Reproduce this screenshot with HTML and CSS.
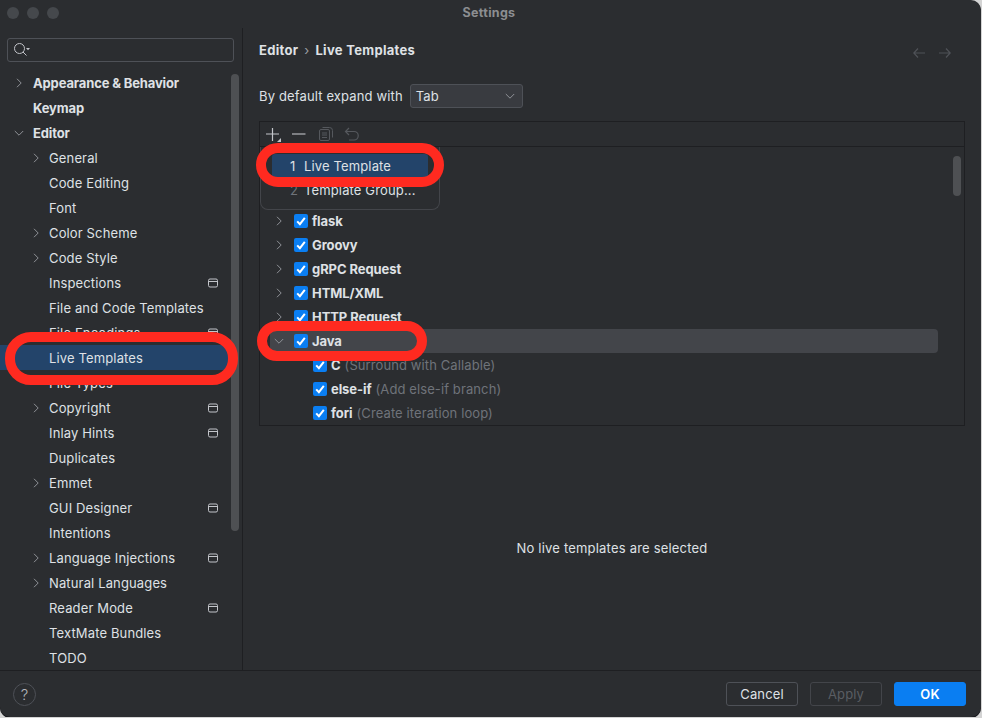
FILE: index.html
```html
<!DOCTYPE html>
<html lang="en">
<head>
  <meta charset="UTF-8" />
  <title>Settings</title>
  <link rel="stylesheet" href="styles.css">
</head>
<body>
  <svg class="defs" width="0" height="0">
    <symbol id="chev-right" viewBox="0 0 10 10"><path d="M3 .8 7.2 5 3 9.2" fill="none" stroke="#8f9297" stroke-width="1"/></symbol>
    <symbol id="chev-down" viewBox="0 0 10 10"><path d="M.8 3 5 7.2 9.2 3" fill="none" stroke="#8f9297" stroke-width="1"/></symbol>
    <symbol id="project" viewBox="0 0 10 10"><rect x=".5" y="1" width="9" height="8" rx="1.5" fill="none" stroke="#c3c5ca"/><path d="M.5 3.5h9" stroke="#c3c5ca"/></symbol>
    <symbol id="check" viewBox="0 0 14 14"><rect width="14" height="14" rx="2" fill="#0a7ef2"/><path d="M3.2 7.4 5.9 10.2 10.8 3.8" fill="none" stroke="#fff" stroke-width="2"/></symbol>
  </svg>

  <div class="window">
    <div class="titlebar">
      <div class="lights"><span></span><span></span><span></span></div>
      <span class="title">Settings</span>
    </div>

    <div class="main">
      <div class="sidebar">
        <div class="search">
          <svg width="18" height="14" viewBox="0 0 18 14"><circle cx="5.500" cy="5.500" r="5" fill="none" stroke="#c3c5ca"/><path d="M9 9l3.500 3.500" stroke="#c3c5ca"/><path d="M12 5h4l-2 2.200z" fill="#c3c5ca"/></svg>
        </div>
        <ul class="nav">
          <li class="bold"><svg class="chev"><use href="#chev-right"/></svg>Appearance &amp; Behavior</li>
          <li class="bold"><i class="chev"></i>Keymap</li>
          <li class="bold"><svg class="chev"><use href="#chev-down"/></svg>Editor</li>
          <li class="sub"><svg class="chev"><use href="#chev-right"/></svg>General</li>
          <li class="sub"><i class="chev"></i>Code Editing</li>
          <li class="sub"><i class="chev"></i>Font</li>
          <li class="sub"><svg class="chev"><use href="#chev-right"/></svg>Color Scheme</li>
          <li class="sub"><svg class="chev"><use href="#chev-right"/></svg>Code Style</li>
          <li class="sub"><i class="chev"></i>Inspections<svg class="proj"><use href="#project"/></svg></li>
          <li class="sub"><i class="chev"></i>File and Code Templates</li>
          <li class="sub"><i class="chev"></i>File Encodings<svg class="proj"><use href="#project"/></svg></li>
          <li class="sub selected"><i class="chev"></i>Live Templates</li>
          <li class="sub"><i class="chev"></i>File Types</li>
          <li class="sub"><svg class="chev"><use href="#chev-right"/></svg>Copyright<svg class="proj"><use href="#project"/></svg></li>
          <li class="sub"><i class="chev"></i>Inlay Hints<svg class="proj"><use href="#project"/></svg></li>
          <li class="sub"><i class="chev"></i>Duplicates</li>
          <li class="sub"><svg class="chev"><use href="#chev-right"/></svg>Emmet</li>
          <li class="sub"><i class="chev"></i>GUI Designer<svg class="proj"><use href="#project"/></svg></li>
          <li class="sub"><i class="chev"></i>Intentions</li>
          <li class="sub"><svg class="chev"><use href="#chev-right"/></svg>Language Injections<svg class="proj"><use href="#project"/></svg></li>
          <li class="sub"><svg class="chev"><use href="#chev-right"/></svg>Natural Languages</li>
          <li class="sub"><i class="chev"></i>Reader Mode<svg class="proj"><use href="#project"/></svg></li>
          <li class="sub"><i class="chev"></i>TextMate Bundles</li>
          <li class="sub"><i class="chev"></i>TODO</li>
        </ul>
        <div class="thumb nav-thumb"></div>
      </div>

      <div class="content">
        <div class="crumbs">
          <b>Editor</b><span class="sep">›</span><b>Live Templates</b>
          <div class="history">
            <svg width="12" height="10" viewBox="0 0 12 10"><path d="M5 .5.8 5 5 9.500M.8 5H12" fill="none" stroke="#4f5257" stroke-width="1.200"/></svg>
            <svg width="12" height="10" viewBox="0 0 12 10"><path d="M7 .5 11.200 5 7 9.500M11.200 5H0" fill="none" stroke="#4f5257" stroke-width="1.200"/></svg>
          </div>
        </div>

        <div class="expand">
          <span>By default expand with</span>
          <div class="select">Tab<svg width="10" height="10"><use href="#chev-down"/></svg></div>
        </div>

        <div class="panel">
          <div class="toolbar">
            <svg width="18" height="18" viewBox="0 0 18 18"><path d="M6.500 3v13M0 9h13" stroke="#c3c5ca" stroke-width="1.200"/><path d="M15 13v4h-4z" fill="#c3c5ca"/></svg>
            <svg width="14" height="14" viewBox="0 0 14 14"><path d="M0 7h13.500" stroke="#b4b6bb" stroke-width="1.200"/></svg>
            <svg class="tool-copy" width="14" height="14" viewBox="0 0 14 14"><rect x=".5" y="2.500" width="10" height="11" rx="1.500" fill="none" stroke="#55585d"/><path d="M3.500.5h7a3 3 0 0 1 3 3v7M3 6h5M3 8h5M3 10.500h5" fill="none" stroke="#55585d"/></svg>
            <svg class="tool-undo" width="16" height="14" viewBox="0 0 16 14"><path d="M5 1 1.500 4.500 5 8M1.500 4.500H10a3.800 3.800 0 0 1 0 8.500H5" fill="none" stroke="#55585d" stroke-width="1.200"/></svg>
          </div>
          <div class="tree">
            <div class="row"><svg class="tree-chev"><use href="#chev-right"/></svg><svg class="box"><use href="#check"/></svg><b>Angular</b></div>
            <div class="row"><svg class="tree-chev"><use href="#chev-right"/></svg><svg class="box"><use href="#check"/></svg><b>CSS</b></div>
            <div class="row"><svg class="tree-chev"><use href="#chev-right"/></svg><svg class="box"><use href="#check"/></svg><b>flask</b></div>
            <div class="row"><svg class="tree-chev"><use href="#chev-right"/></svg><svg class="box"><use href="#check"/></svg><b>Groovy</b></div>
            <div class="row"><svg class="tree-chev"><use href="#chev-right"/></svg><svg class="box"><use href="#check"/></svg><b>gRPC Request</b></div>
            <div class="row"><svg class="tree-chev"><use href="#chev-right"/></svg><svg class="box"><use href="#check"/></svg><b>HTML/XML</b></div>
            <div class="row"><svg class="tree-chev"><use href="#chev-right"/></svg><svg class="box"><use href="#check"/></svg><b>HTTP Request</b></div>
            <div class="row current"><svg class="tree-chev"><use href="#chev-down"/></svg><svg class="box"><use href="#check"/></svg><b>Java</b></div>
            <div class="row child"><svg class="box"><use href="#check"/></svg><b>C</b><span class="hint">(Surround with Callable)</span></div>
            <div class="row child"><svg class="box"><use href="#check"/></svg><b>else-if</b><span class="hint">(Add else-if branch)</span></div>
            <div class="row child"><svg class="box"><use href="#check"/></svg><b>fori</b><span class="hint">(Create iteration loop)</span></div>
          </div>
          <div class="thumb tree-thumb"></div>
          <div class="popup">
            <div class="popup-item active"><span class="num">1</span>Live Template</div>
            <div class="popup-item"><span class="num">2</span>Template Group...</div>
          </div>
        </div>

        <div class="empty">No live templates are selected</div>
      </div>
    </div>

    <div class="footer">
      <div class="help">?</div>
      <div class="btn">Cancel</div>
      <div class="btn off">Apply</div>
      <div class="btn ok">OK</div>
    </div>

    <div class="mark mark-nav"></div>
    <div class="mark mark-popup"></div>
    <div class="mark mark-java"></div>
  </div>
</body>
</html>
```

FILE: styles.css
```css
* {
  margin: 0;
  padding: 0;
  box-sizing: border-box;
}

body {
  background: #d4d4d4;
  font-family: Inter, "Liberation Sans", sans-serif;
  font-size: 13px;
  letter-spacing: .14px;
  color: #dfe1e5;
  overflow: hidden;
}

.defs {
  position: absolute;
}

.window {
  position: relative;
  width: 981px;
  height: 717px;
  display: flex;
  flex-direction: column;
  background: #2b2d30;
  border-radius: 0 10px 10px 10px;
  box-shadow: 0 1px 0 #15161a;
  overflow: hidden;
}

/* Title bar */
.titlebar {
  height: 28px;
  display: flex;
  align-items: center;
  justify-content: center;
  position: relative;
  flex-shrink: 0;
}

.lights {
  position: absolute;
  left: 7px;
  top: 7px;
  display: flex;
  gap: 8px;
}

.lights span {
  width: 12px;
  height: 12px;
  border-radius: 50%;
  background: #45484c;
}

.title {
  margin-left: -3px;
  margin-top: -3px;
  font-size: 12.500px;
  font-weight: 700;
  letter-spacing: .3px;
  color: #8c8e91;
}

.main {
  flex: 1;
  display: flex;
  min-height: 0;
}

/* Sidebar */
.sidebar {
  position: relative;
  width: 243px;
  border-right: 1px solid #1e1f22;
  overflow: hidden;
  flex-shrink: 0;
}

.search {
  margin: 10px 8px 8px 7px;
  height: 24px;
  border: 1px solid #4e5157;
  border-radius: 3px;
  display: flex;
  align-items: center;
  padding-left: 6px;
}

.nav {
  list-style: none;
}

.nav li {
  height: 25px;
  display: flex;
  align-items: center;
  padding-left: 14px;
  white-space: nowrap;
}

.nav li.bold {
  font-weight: 700;
  letter-spacing: -.14px;
}

.nav li.sub {
  padding-left: 31px;
}

.nav li.selected {
  background: #23446a;
  margin-right: 14px;
}

.chev {
  display: block;
  width: 10px;
  height: 10px;
  margin-right: 9px;
  flex-shrink: 0;
}

.sub .chev {
  margin-right: 8px;
}

.proj {
  width: 10px;
  height: 10px;
  margin-left: auto;
  margin-right: 24px;
  flex-shrink: 0;
}

.thumb {
  position: absolute;
  width: 8px;
  background: #4e5053;
  border-radius: 4px;
}

.nav-thumb {
  left: 231px;
  top: 46px;
  height: 457px;
}

/* Content */
.content {
  flex: 1;
  display: flex;
  flex-direction: column;
  padding: 0 16px 0 16px;
  min-width: 0;
}

.crumbs {
  height: 44px;
  display: flex;
  align-items: center;
  gap: 6px;
}

.crumbs b {
  font-weight: 700;
  letter-spacing: .3px;
}

.crumbs .sep {
  color: #9a9da2;
}

.history {
  margin-left: auto;
  margin-top: 6px;
  margin-right: 14px;
  display: flex;
  gap: 14px;
}

.expand {
  height: 24px;
  margin-top: 12px;
  display: flex;
  align-items: center;
}

.select {
  width: 113px;
  height: 24px;
  margin-left: 7px;
  padding: 0 7px 0 5px;
  background: #393b40;
  border: 1px solid #4e5157;
  border-radius: 3px;
  display: flex;
  align-items: center;
  justify-content: space-between;
}

.panel {
  position: relative;
  height: 305px;
  margin-top: 13px;
  border: 1px solid #1e1f22;
  overflow: visible;
  flex-shrink: 0;
}

.toolbar {
  height: 25px;
  border-bottom: 1px solid #1e1f22;
  display: flex;
  align-items: center;
  gap: 8px;
  padding-left: 6px;
}

.tool-copy {
  margin-left: 5px;
}

.tool-undo {
  margin-left: 3px;
}

.tree {
  height: 278px;
  padding-top: 14px;
  overflow: hidden;
}

.row {
  height: 24px;
  margin: 0 26px 0 10px;
  padding-left: 4px;
  display: flex;
  align-items: center;
  border-radius: 4px;
}

.row b {
  font-weight: 700;
  letter-spacing: -.08px;
}

.row.current {
  background: #43454a;
}

.row.child {
  padding-left: 43px;
}

.tree-chev {
  width: 10px;
  height: 10px;
  margin-right: 10px;
}

.box {
  width: 14px;
  height: 14px;
  margin-right: 4px;
  flex-shrink: 0;
}

.hint {
  margin-left: 4px;
  letter-spacing: .1px;
  color: #6f737a;
}

.tree-thumb {
  right: 3px;
  top: 34px;
  height: 40px;
}

.popup {
  position: absolute;
  left: 0;
  top: 25px;
  width: 180px;
  height: 63px;
  padding-top: 7px;
  background: #2b2d30;
  border: 1px solid #43454a;
  border-top: none;
  border-radius: 0 0 8px 8px;
}

.popup-item {
  height: 24px;
  margin: 0 11px;
  padding-left: 18px;
  display: flex;
  align-items: center;
}

.popup-item.active {
  background: #23446a;
  border-radius: 3px;
}

.num {
  width: 14px;
  color: #6f737a;
}

.active .num {
  color: #dfe1e5;
}

.empty {
  flex: 1;
  display: flex;
  align-items: center;
  justify-content: center;
  letter-spacing: .2px;
}

/* Footer */
.footer {
  height: 47px;
  border-top: 1px solid #1e1f22;
  display: flex;
  align-items: center;
  padding: 0 15px 0 13px;
  gap: 12px;
  flex-shrink: 0;
}

.help {
  width: 23px;
  height: 23px;
  margin-right: auto;
  border: 1px solid #4e5157;
  border-radius: 50%;
  display: flex;
  align-items: center;
  justify-content: center;
  font-size: 15px;
  font-weight: 300;
  color: #b4b6bb;
}

.btn {
  width: 72px;
  height: 24px;
  border: 1px solid #4e5157;
  border-radius: 3px;
  display: flex;
  align-items: center;
  justify-content: center;
}

.btn.off {
  border-color: #43454a;
  color: #5a5d63;
}

.btn.ok {
  background: #0a7ef2;
  border-color: #0a7ef2;
  color: #fff;
  font-weight: 600;
}

/* Red marker outlines drawn over the shot */
.mark {
  position: absolute;
  border: 10px solid #ff2a20;
}

.mark-nav {
  left: 5px;
  top: 332px;
  width: 233px;
  height: 53px;
  border-radius: 26px;
}

.mark-popup {
  left: 256px;
  top: 143px;
  width: 188px;
  height: 44px;
  border-radius: 22px;
}

.mark-java {
  left: 257px;
  top: 321px;
  width: 170px;
  height: 40px;
  border-radius: 20px;
}
```
